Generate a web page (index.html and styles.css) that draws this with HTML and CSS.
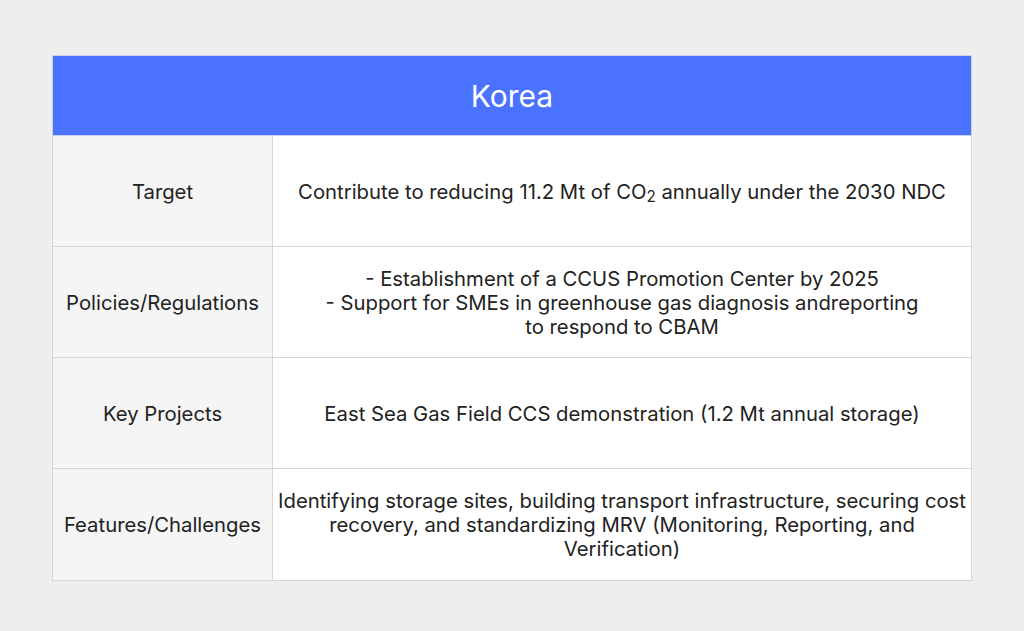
FILE: index.html
```html
<!DOCTYPE html>
<html lang="en">
<head>
    <meta charset="UTF-8">
    <meta name="viewport" content="width=device-width, initial-scale=1.0">
    <title>Korea</title>
    <link rel="stylesheet" href="styles.css">
</head>
<body>
    <div class="page">
        <table class="ccus-table">
            <colgroup>
                <col class="col-label">
                <col class="col-text">
            </colgroup>
            <thead>
                <tr>
                    <th colspan="2">Korea</th>
                </tr>
            </thead>
            <tbody>
                <tr>
                    <td class="label">Target</td>
                    <td>Contribute to reducing 11.2 Mt of CO<sub>2</sub> annually under the 2030 NDC</td>
                </tr>
                <tr>
                    <td class="label">Policies/Regulations</td>
                    <td>- Establishment of a CCUS Promotion Center by 2025<br>- Support for SMEs in greenhouse gas diagnosis andreporting<br>to respond to CBAM</td>
                </tr>
                <tr>
                    <td class="label">Key Projects</td>
                    <td>East Sea Gas Field CCS demonstration (1.2 Mt annual storage)</td>
                </tr>
                <tr class="last">
                    <td class="label">Features/Challenges</td>
                    <td>Identifying storage sites, building transport infrastructure, securing cost recovery, and standardizing MRV (Monitoring, Reporting, and Verification)</td>
                </tr>
            </tbody>
        </table>
    </div>
</body>
</html>
```

FILE: styles.css
```css
body {
    margin: 0;
    padding: 0;
    background-color: #eeeeee;
    font-family: Inter, "Noto Sans", sans-serif;
    color: #222;
}
.page {
    padding: 55px 52px;
}
.ccus-table {
    width: 920px;
    border-collapse: collapse;
    table-layout: fixed;
    background-color: #fff;
}
.col-label {
    width: 220px;
}
.ccus-table th {
    height: 79px;
    padding: 0;
    background-color: #4a72ff;
    color: #fff;
    font-size: 30px;
    font-weight: 400;
    border: 1px solid #c9cfe6;
}
.ccus-table td {
    height: 109px;
    padding: 1px 4px 0;
    border: 1px solid #d6d6d6;
    text-align: center;
    font-size: 20.3px;
    line-height: 24px;
}
.ccus-table tr.last td {
    height: 110px;
}
.ccus-table td.label {
    background-color: #f5f5f5;
}
.ccus-table sub {
    font-size: 0.75em;
    vertical-align: -0.2em;
    line-height: 0;
}
```
